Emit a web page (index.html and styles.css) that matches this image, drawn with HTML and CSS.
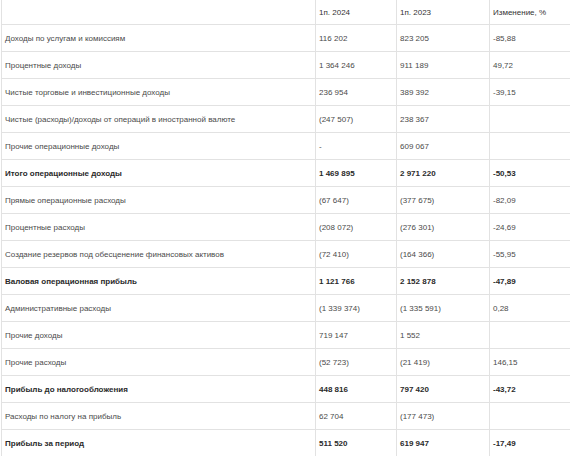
FILE: index.html
```html
<!DOCTYPE html>
<html lang="ru">
<head>
<meta charset="utf-8">
<link rel="stylesheet" href="styles.css">
</head>
<body>
<table class="report">
  <colgroup>
    <col class="c-name"><col class="c-a"><col class="c-b"><col class="c-c">
  </colgroup>
  <thead>
    <tr class="head"><th></th><th>1п. 2024</th><th>1п. 2023</th><th>Изменение, %</th></tr>
  </thead>
  <tbody>
    <tr><td>Доходы по услугам и комиссиям</td><td>116 202</td><td>823 205</td><td>-85,88</td></tr>
    <tr><td>Процентные доходы</td><td>1 364 246</td><td>911 189</td><td>49,72</td></tr>
    <tr><td>Чистые торговые и инвестиционные доходы</td><td>236 954</td><td>389 392</td><td>-39,15</td></tr>
    <tr><td>Чистые (расходы)/доходы от операций в иностранной валюте</td><td>(247 507)</td><td>238 367</td><td></td></tr>
    <tr><td>Прочие операционные доходы</td><td>-</td><td>609 067</td><td></td></tr>
    <tr class="total"><td>Итого операционные доходы</td><td>1 469 895</td><td>2 971 220</td><td>-50,53</td></tr>
    <tr><td>Прямые операционные расходы</td><td>(67 647)</td><td>(377 675)</td><td>-82,09</td></tr>
    <tr><td>Процентные расходы</td><td>(208 072)</td><td>(276 301)</td><td>-24,69</td></tr>
    <tr><td>Создание резервов под обесценение финансовых активов</td><td>(72 410)</td><td>(164 366)</td><td>-55,95</td></tr>
    <tr class="total"><td>Валовая операционная прибыль</td><td>1 121 766</td><td>2 152 878</td><td>-47,89</td></tr>
    <tr><td>Административные расходы</td><td>(1 339 374)</td><td>(1 335 591)</td><td>0,28</td></tr>
    <tr><td>Прочие доходы</td><td>719 147</td><td>1 552</td><td></td></tr>
    <tr><td>Прочие расходы</td><td>(52 723)</td><td>(21 419)</td><td>146,15</td></tr>
    <tr class="total"><td>Прибыль до налогообложения</td><td>448 816</td><td>797 420</td><td>-43,72</td></tr>
    <tr><td>Расходы по налогу на прибыль</td><td>62 704</td><td>(177 473)</td><td></td></tr>
    <tr class="total"><td>Прибыль за период</td><td>511 520</td><td>619 947</td><td>-17,49</td></tr>
  </tbody>
</table>
</body>
</html>
```
FILE: styles.css
```css
html, body {
  margin: 0;
  padding: 0;
  background: #fff;
  overflow: hidden;
}
body {
  width: 570px;
  height: 456px;
}
.report {
  margin-left: 1px;
  border-collapse: collapse;
  table-layout: fixed;
  width: 569px;
  font-family: "Liberation Sans", Arial, sans-serif;
  font-size: 8px;
  color: #4a4a4a;
  border-left: 1px solid #e2e2e2;
}
.c-name { width: 314px; }
.c-a { width: 81px; }
.c-b { width: 93px; }
.c-c { width: 81px; }
.report th,
.report td {
  text-align: left;
  font-weight: normal;
  padding: 0 3px;
  white-space: nowrap;
  overflow: hidden;
  border-bottom: 1px solid #e2e2e2;
  border-left: 1px solid #e2e2e2;
}
.report td:first-child,
.report th:first-child {
  border-left: none;
}
.report .head th {
  height: 24px;
  color: #333;
}
.report tbody td {
  height: 26px;
}
.report .total td {
  color: #2a2a2a;
  font-weight: bold;
}
```
